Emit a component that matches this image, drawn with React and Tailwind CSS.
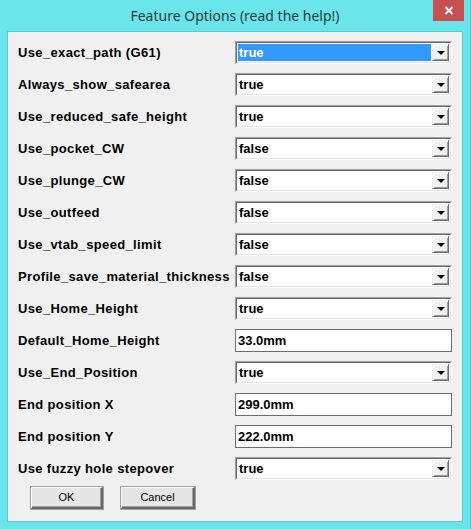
const rows = [
  { label: 'Use_exact_path (G61)', type: 'select', value: 'true', selected: true },
  { label: 'Always_show_safearea', type: 'select', value: 'true' },
  { label: 'Use_reduced_safe_height', type: 'select', value: 'true' },
  { label: 'Use_pocket_CW', type: 'select', value: 'false' },
  { label: 'Use_plunge_CW', type: 'select', value: 'false' },
  { label: 'Use_outfeed', type: 'select', value: 'false' },
  { label: 'Use_vtab_speed_limit', type: 'select', value: 'false' },
  { label: 'Profile_save_material_thickness', type: 'select', value: 'false' },
  { label: 'Use_Home_Height', type: 'select', value: 'true' },
  { label: 'Default_Home_Height', type: 'text', value: '33.0mm' },
  { label: 'Use_End_Position', type: 'select', value: 'true' },
  { label: 'End position X', type: 'text', value: '299.0mm' },
  { label: 'End position Y', type: 'text', value: '222.0mm' },
  { label: 'Use fuzzy hole stepover', type: 'select', value: 'true' },
];

const font = { fontFamily: '"Liberation Sans", Arial, sans-serif' };

const ComboBox = ({ value, selected }) => (
  <div className="h-[23px] w-[217px] border-t border-l border-t-[#a0a0a0] border-l-[#a0a0a0] border-b border-r border-b-[#ffffff] border-r-[#ffffff]">
    <div className="h-full flex bg-white border-t border-l border-t-[#696969] border-l-[#696969] border-b border-r border-b-[#e3e3e3] border-r-[#e3e3e3] p-px">
      <div
        className={`flex-1 flex items-center pl-[1px] text-[13px] font-bold leading-none ${
          selected ? 'bg-[#3399ff] text-white' : 'text-black'
        }`}
      >
        {value}
      </div>
      <div className="w-[17px] ml-px flex items-center justify-center bg-[#f0f0f0] border-t border-l border-t-[#f0f0f0] border-l-[#f0f0f0] border-b border-r border-b-[#696969] border-r-[#696969] shadow-[inset_1px_1px_0_#ffffff,inset_-1px_-1px_0_#a0a0a0]">
        <div className="w-0 h-0 border-l-[4px] border-r-[4px] border-t-[4px] border-l-transparent border-r-transparent border-t-black" />
      </div>
    </div>
  </div>
);

const TextBox = ({ value }) => (
  <div className="h-[23px] w-[217px] border border-[#6d6d6d] bg-white flex items-center pl-[2px] text-[13px] font-bold leading-none text-black">
    {value}
  </div>
);

const Button = ({ children, className = '' }) => (
  <div
    className={`h-[22px] flex items-center justify-center bg-[#e6e6e6] border-t border-l border-t-[#ffffff] border-l-[#ffffff] border-b-2 border-r-2 border-b-[#696969] border-r-[#696969] shadow-[inset_-1px_-1px_0_#a0a0a0,0_0_0_1px_#a0a0a0] text-[11px] text-black ${className}`}
  >
    {children}
  </div>
);

export default function App() {
  return (
    <div className="w-[471px] h-[529px] bg-[#6be5ec] flex flex-col border-r border-r-[#5fcfd6]" style={font}>
      <div className="h-[31px] shrink-0 flex relative">
        <div
          className="flex-1 flex items-center justify-center pb-[1px] text-[14px] text-[#2b3a3c]"
          style={{ fontFamily: '"Noto Sans", "Open Sans", sans-serif' }}
        >
          Feature Options (read the help!)
        </div>
        <div className="absolute left-[433px] top-0 w-[31px] h-[21px] bg-[#c75050] flex items-center justify-center">
          <svg width="10" height="9" viewBox="0 0 10 9">
            <path d="M1.5 1 L8.5 8 M8.5 1 L1.5 8" stroke="white" strokeWidth="2" />
          </svg>
        </div>
      </div>
      <div className="mx-[7px] mb-[7px] flex-1 border border-[#58c9d1] bg-[#f0f0f0] flex flex-col pt-[9px] pl-[10px]">
        <div className="flex flex-col gap-[9px]">
          {rows.map((r) => (
            <div key={r.label} className="flex items-center h-[23px]">
              <div className="w-[217px] text-[13px] font-bold tracking-[0.35px] text-black">{r.label}</div>
              {r.type === 'select' ? (
                <ComboBox value={r.value} selected={r.selected} />
              ) : (
                <TextBox value={r.value} />
              )}
            </div>
          ))}
        </div>
        <div className="flex mt-[7px] pl-[13px] gap-[18px]">
          <Button className="w-[72px]">OK</Button>
          <Button className="w-[74px]">Cancel</Button>
        </div>
      </div>
    </div>
  );
}
